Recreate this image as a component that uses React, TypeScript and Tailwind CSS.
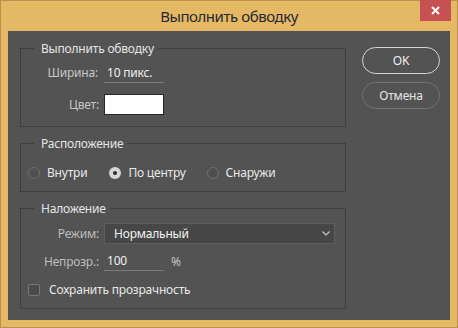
import React from "react";

const font = { fontFamily: '"Noto Sans", "Open Sans", sans-serif' };

function Legend({ children }: { children: React.ReactNode }) {
  return (
    <div className="-mt-[8px] ml-[13px] self-start bg-[#535353] pl-[7px] pr-[4px] text-[12px] leading-[16px] text-[#e4e4e4]">
      {children}
    </div>
  );
}

function Radio({ checked, label }: { checked?: boolean; label: string }) {
  return (
    <div className="flex items-center">
      {checked ? (
        <span className="flex h-[12px] w-[12px] items-center justify-center rounded-full bg-[#d6d6d6]">
          <span className="h-[4px] w-[4px] rounded-full bg-[#2e2e2e]" />
        </span>
      ) : (
        <span className="h-[12px] w-[12px] rounded-full border border-[#6f6f6f] bg-[#4f4f4f]" />
      )}
      <span className="ml-[7px] text-[12px] leading-[16px] text-[#e8e8e8]">{label}</span>
    </div>
  );
}

export default function App() {
  return (
    <div
      className="flex h-[328px] w-[458px] flex-col border border-[#b8914f] bg-[#e5b865] tracking-[-0.2px]"
      style={font}
    >
      <div className="relative flex h-[30px] items-center justify-center">
        <span className="text-[15px] leading-[20px] tracking-[-0.45px] text-[#1f2a32]">Выполнить обводку</span>
        <div className="absolute right-[6px] top-[-1px] flex h-[21px] w-[31px] items-center justify-center bg-[#c75050]">
          <svg width="9" height="9" viewBox="0 0 9 9">
            <path d="M1 1 L8 8 M8 1 L1 8" stroke="#fff" strokeWidth="2" />
          </svg>
        </div>
      </div>
      <div className="mx-[7px] flex h-[289px] bg-[#535353]">
        <div className="ml-[12px] mt-[17px] flex w-[326px] flex-col">
          {/* Group 1 */}
          <div className="flex h-[79px] flex-col border border-[#3f3f3f]">
            <Legend>Выполнить обводку</Legend>
            <div className="mt-[6px] flex h-[20px] items-center">
              <span className="w-[77px] text-right text-[12px] leading-[16px] text-[#c6c6c6]">Ширина:</span>
              <div className="ml-[6px] h-[19px] w-[60px] border-b border-[#7d7d7d] pl-[3px] text-[12px] leading-[18px] text-[#f0f0f0]">
                10 пикс.
              </div>
            </div>
            <div className="mt-[11px] flex h-[21px] items-center">
              <span className="w-[78px] text-right text-[12px] leading-[16px] text-[#c6c6c6]">Цвет:</span>
              <div className="ml-[5px] h-[21px] w-[60px] border border-[#262626] bg-white" />
            </div>
          </div>
          {/* Group 2 */}
          <div className="mt-[16px] flex h-[49px] flex-col border border-[#3f3f3f]">
            <Legend>Расположение</Legend>
            <div className="ml-[7px] mt-[11px] flex h-[20px] items-center">
              <Radio label="Внутри" />
              <div className="ml-[22px]">
                <Radio checked label="По центру" />
              </div>
              <div className="ml-[21px]">
                <Radio label="Снаружи" />
              </div>
            </div>
          </div>
          {/* Group 3 */}
          <div className="mt-[16px] flex h-[101px] flex-col border border-[#3f3f3f]">
            <Legend>Наложение</Legend>
            <div className="mt-[6px] flex h-[21px] items-center">
              <span className="w-[78px] text-right text-[12px] leading-[16px] text-[#bdbdbd]">Режим:</span>
              <div className="ml-[5px] flex h-[21px] w-[231px] items-center justify-between border border-[#5e5e5e] bg-[#474747] pl-[9px] pr-[4px]">
                <span className="text-[12px] leading-[16px] text-[#f2f2f2]">Нормальный</span>
                <svg width="8" height="5" viewBox="0 0 8 5">
                  <path d="M0.5 0.5 L4 4 L7.5 0.5" stroke="#c8c8c8" strokeWidth="1.2" fill="none" />
                </svg>
              </div>
            </div>
            <div className="mt-[8px] flex h-[19px] items-center">
              <span className="w-[78px] text-right text-[12px] leading-[16px] text-[#bdbdbd]">Непрозр.:</span>
              <div className="ml-[5px] h-[19px] w-[60px] border-b border-[#7d7d7d] pl-[3px] text-[12px] leading-[18px] text-[#f0f0f0]">
                100
              </div>
              <span className="ml-[7px] text-[12px] leading-[16px] text-[#c6c6c6]">%</span>
            </div>
            <div className="ml-[7px] mt-[11px] flex h-[16px] items-center">
              <span className="h-[12px] w-[12px] rounded-[2px] border border-[#767676] bg-[#4b4b4b]" />
              <span className="ml-[9px] text-[12px] leading-[16px] text-[#e8e8e8]">Сохранить прозрачность</span>
            </div>
          </div>
        </div>
        <div className="ml-[16px] mt-[16px] flex w-[78px] flex-col">
          <div className="flex h-[27px] items-center justify-center rounded-full border-[1.5px] border-[#d4d4d4] text-[12px] leading-[16px] text-[#f0f0f0]">
            OK
          </div>
          <div className="mt-[8px] flex h-[27px] items-center justify-center rounded-full border border-[#747474] text-[12px] leading-[16px] text-[#e4e4e4]">
            Отмена
          </div>
        </div>
      </div>
    </div>
  );
}
